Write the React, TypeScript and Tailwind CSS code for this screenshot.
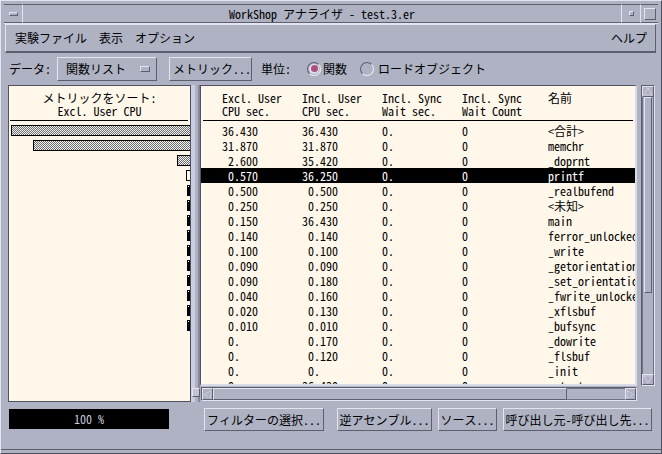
import React from 'react';

// Motif-style bevels
const raised = 'border border-t-[#e3e5ee] border-l-[#e3e5ee] border-b-[#5c5f70] border-r-[#5c5f70]';
const sunken = 'border border-t-[#5c5f70] border-l-[#5c5f70] border-b-[#e3e5ee] border-r-[#e3e5ee]';

type Row = [string, string, string, string, string];

const rows: Row[] = [
  ['36.430', '36.430', '0.', '0', '<合計>'],
  ['31.870', '31.870', '0.', '0', 'memchr'],
  [' 2.600', '35.420', '0.', '0', '_doprnt'],
  [' 0.570', '36.250', '0.', '0', 'printf'],
  [' 0.500', ' 0.500', '0.', '0', '_realbufend'],
  [' 0.250', ' 0.250', '0.', '0', '<未知>'],
  [' 0.150', '36.430', '0.', '0', 'main'],
  [' 0.140', ' 0.140', '0.', '0', 'ferror_unlocked'],
  [' 0.100', ' 0.100', '0.', '0', '_write'],
  [' 0.090', ' 0.090', '0.', '0', '_getorientation'],
  [' 0.090', ' 0.180', '0.', '0', '_set_orientation'],
  [' 0.040', ' 0.160', '0.', '0', '_fwrite_unlocked'],
  [' 0.020', ' 0.130', '0.', '0', '_xflsbuf'],
  [' 0.010', ' 0.010', '0.', '0', '_bufsync'],
  [' 0.', ' 0.170', '0.', '0', '_dowrite'],
  [' 0.', ' 0.120', '0.', '0', '_flsbuf'],
  [' 0.', ' 0.', '0.', '0', '_init'],
  [' 0.', '36.430', '0.', '0', '_start'],
];

const SELECTED = 3;
const MAX = 36.43;

function Bar({ v }: { v: number }) {
  if (v <= 0) return null;
  const w = (v / MAX) * 179;
  if (w < 2.5) {
    // tiny bars are almost solid
    return (
      <div className="w-[3px] h-[11px] bg-black flex justify-end pt-[1px]">
        <div className="w-[1px] h-[1px] bg-white mr-[1px]" />
      </div>
    );
  }
  if (w < 4) {
    return <div className="w-[4px] h-[11px] border border-black border-r-0 bg-[#fff7ea]" />;
  }
  return (
    <div
      className="h-[11px] border border-black border-r-0 bg-[repeating-conic-gradient(#6e6e6e_0_25%,#f2f2f2_0_50%)] bg-size-[2px_2px]"
      style={{ width: Math.round(w) }}
    />
  );
}

function Radio({ on }: { on?: boolean }) {
  return (
    <span className="w-[14px] h-[14px] rounded-full border border-[#5c5f70] border-b-[#eceef5] border-r-[#eceef5] flex items-center justify-center">
      {on && (
        <span className="w-[10px] h-[10px] rounded-full bg-[#dedfea] flex items-center justify-center">
          <span className="w-[7px] h-[7px] rounded-full bg-[#b24e7b]" />
        </span>
      )}
    </span>
  );
}

function Arrow({ dir }: { dir: 'up' | 'down' | 'left' | 'right' }) {
  const pts = {
    up: '5.5,1.5 10,9.5 1,9.5',
    down: '1,1.5 10,1.5 5.5,9.5',
    left: '1.5,5.5 9.5,1 9.5,10',
    right: '1.5,1 9.5,5.5 1.5,10',
  }[dir];
  return (
    <svg width="11" height="11" viewBox="0 0 11 11">
      <polygon points={pts} fill="none" stroke="#eef0f6" strokeWidth="1" strokeDasharray="1 1" />
    </svg>
  );
}

function Btn({ children, className }: { children: React.ReactNode; className: string }) {
  return (
    <div className={`h-[23px] ${raised} flex items-center justify-center whitespace-pre ${className}`}>
      {children}
    </div>
  );
}

export default function App() {
  return (
    <div className="w-[662px] h-[454px] overflow-hidden bg-[#aeb2c3] text-black text-[12px] leading-[14px] font-['Noto_Sans_Mono_CJK_JP','DejaVu_Sans_Mono','Noto_Sans_CJK_JP',monospace] border border-[#e4e6ef] border-b-[#4d505e] border-r-[#4d505e] flex flex-col">
      {/* Title bar */}
      <div className="mt-[3px] mx-[3px] h-[20px] flex border-b border-[#e3e5ee]">
        <div className="w-[19px] border-t border-b border-[#5c5f70] border-r border-r-[#e3e5ee] flex items-center justify-center">
          <span className={`w-[9px] h-[4px] ${raised}`} />
        </div>
        <div className="flex-1 border-t border-b border-[#5c5f70] flex items-center justify-center whitespace-pre">
          WorkShop アナライザ - test.3.er
        </div>
        <div className="w-[19px] border-t border-b border-l border-[#5c5f70] border-l-[#e3e5ee] flex items-center justify-center">
          <span className={`w-[5px] h-[5px] ${raised}`} />
        </div>
        <div className="w-[18px] border-t border-b border-l border-[#5c5f70] border-l-[#e3e5ee] flex items-center justify-center">
          <span className={`w-[12px] h-[12px] ${raised}`} />
        </div>
      </div>

      {/* Menu bar */}
      <div className={`ml-[4px] w-[651px] h-[29px] ${raised} border-b-2 flex items-center pl-[9px] pr-[8px]`}>
        <span>実験ファイル</span>
        <span className="ml-[12px]">表示</span>
        <span className="ml-[12px]">オプション</span>
        <span className="ml-auto">ヘルプ</span>
      </div>

      {/* Toolbar */}
      <div className="h-[31px] flex items-center pl-[8px] whitespace-pre">
        <span>データ:</span>
        <div className={`ml-[6px] w-[100px] h-[24px] ${raised} flex items-center pl-[8px]`}>
          <span>関数リスト</span>
          <span className={`ml-[14px] w-[10px] h-[6px] ${raised}`} />
        </div>
        <div className={`ml-[12px] w-[83px] h-[24px] ${raised} flex items-center pl-[3px]`}>メトリック...</div>
        <span className="ml-[9px]">単位:</span>
        <span className="ml-[16px]"><Radio on /></span>
        <span className="ml-[2px]">関数</span>
        <span className="ml-[13px]"><Radio /></span>
        <span className="ml-[4px]">ロードオブジェクト</span>
      </div>

      {/* Main */}
      <div className="mt-[1px] h-[317px] flex">
        {/* Left: sort metric bars */}
        <div className="ml-[7px] w-[183px] border border-[#4f5262] bg-[#fff7ea] flex flex-col overflow-hidden">
          <div className="h-[34px] pt-[5px] leading-[13px] text-center whitespace-pre">
            <div>メトリックをソート:</div>
            <div>Excl. User CPU</div>
          </div>
          <div className="h-[1px] ml-[1px] mr-[2px] bg-black" />
          <div className="pt-[2px]">
            {rows.map((r, i) => (
              <div key={i} className="h-[15px] flex items-center justify-end">
                <Bar v={parseFloat(r[0])} />
              </div>
            ))}
          </div>
        </div>

        {/* Sash */}
        <div className="w-[9px] flex relative">
          <div className="w-[4px] bg-[#cbcee0]" />
          <div className="w-[3px] bg-[#aeb2c3]" />
          <div className="w-[2px] bg-[#85889a]" />
          <div className={`absolute left-[1px] bottom-[5px] w-[8px] h-[9px] bg-[#c2c5d6] ${raised}`} />
        </div>

        {/* Right: function table */}
        <div className="w-[460px] flex flex-col">
          <div className="h-[301px] flex">
            <div className="w-[437px] border-t border-l border-[#4f5262] border-b-2 border-r-2 border-b-[#d9dbe6] border-r-[#d9dbe6] bg-[#fff7ea] overflow-hidden whitespace-pre">
              <div className="h-[34px] pt-[5px] leading-[13px] pl-[21px] grid grid-cols-[80px_80px_80px_86px_1fr]">
                <div>Excl. User<br />CPU sec.</div>
                <div>Incl. User<br />CPU sec.</div>
                <div>Incl. Sync<br />Wait sec.</div>
                <div>Incl. Sync<br />Wait Count</div>
                <div>名前</div>
              </div>
              <div className="h-[1px] mx-[2px] bg-black" />
              <div className="pt-[2px]">
                {rows.map((r, i) => (
                  <div
                    key={i}
                    className={`h-[15px] pl-[21px] grid grid-cols-[80px_80px_80px_86px_1fr] items-center ${
                      i === SELECTED ? 'bg-black text-white' : ''
                    }`}
                  >
                    {r.map((c, j) => (
                      <div key={j}>{c}</div>
                    ))}
                  </div>
                ))}
              </div>
            </div>

            {/* Vertical scrollbar */}
            <div className={`ml-[4px] w-[14px] ${sunken} flex flex-col`}>
              <div className={`h-[11px] ${raised} flex items-center justify-center`}>
                <Arrow dir="up" />
              </div>
              <div className="flex-1 flex flex-col px-[1px] border-l border-r border-[#6e7182]">
                <div className={`h-[196px] ${raised}`} />
              </div>
              <div className={`h-[11px] ${raised} flex items-center justify-center`}>
                <Arrow dir="down" />
              </div>
            </div>
          </div>

          {/* Horizontal scrollbar */}
          <div className="h-[16px] flex items-center">
            <div className={`ml-[1px] w-[436px] h-[14px] ${sunken} flex`}>
              <div className={`w-[11px] ${raised} flex items-center justify-center`}>
                <Arrow dir="left" />
              </div>
              <div className={`w-[354px] ${raised}`} />
              <div className="flex-1 border-t border-b border-[#6e7182]" />
              <div className={`w-[11px] ${raised} flex items-center justify-center`}>
                <Arrow dir="right" />
              </div>
            </div>
          </div>
        </div>
      </div>

      {/* Bottom: percentage + action buttons */}
      <div className="h-[48px] flex items-start pt-[6px] border-b border-[#5c5f70] whitespace-pre">
        <div className="ml-[8px] mt-[1px] w-[160px] h-[20px] bg-black text-[#c8cad8] flex items-center justify-center">
          100 %
        </div>
        <Btn className="ml-[35px] w-[120px]">フィルターの選択...</Btn>
        <Btn className="ml-[13px] w-[95px]">逆アセンブル...</Btn>
        <Btn className="ml-[6px] w-[59px]">ソース...</Btn>
        <Btn className="ml-[6px] w-[149px]">呼び出し元-呼び出し先...</Btn>
      </div>
    </div>
  );
}
